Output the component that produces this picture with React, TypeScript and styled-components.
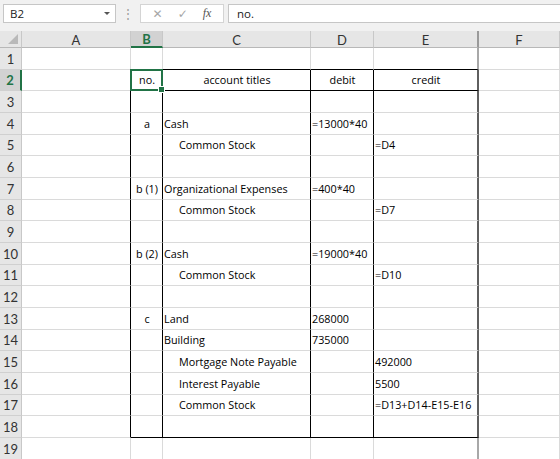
import styled, { createGlobalStyle } from "styled-components";

const GlobalStyle = createGlobalStyle`
  html, body {
    margin: 0;
    padding: 0;
    background: #ffffff;
  }
  body {
    font-family: "Open Sans", "Liberation Sans", sans-serif;
  }
`;

const GREEN = "#217346";
const GRID = "#dadada";
const INK = "#000000";

const Page = styled.div`
  width: 560px;
  height: 459px;
  overflow: hidden;
  background: #ffffff;
  display: flex;
  flex-direction: column;
`;

const FormulaBar = styled.div`
  height: 31px;
  flex: none;
  background: #f1f1f1;
  display: flex;
  align-items: flex-start;
  padding: 4px 0 0 3px;
  box-sizing: border-box;
`;

const NameBox = styled.div`
  width: 113px;
  height: 19px;
  box-sizing: border-box;
  background: #fff;
  border: 1px solid #c6c6c6;
  display: flex;
  align-items: center;
  justify-content: space-between;
  padding: 0 5px 0 6px;
  font-size: 11.5px;
  color: #222;
`;

const Caret = styled.span`
  width: 0;
  height: 0;
  border-left: 3px solid transparent;
  border-right: 3px solid transparent;
  border-top: 3px solid #555;
`;

const Dots = styled.div`
  width: 24px;
  height: 19px;
  display: flex;
  align-items: center;
  justify-content: center;
  color: #9a9a9a;
  font-size: 12px;
`;

const ButtonBox = styled.div`
  width: 84px;
  height: 19px;
  box-sizing: border-box;
  background: #fff;
  border: 1px solid #d4d4d4;
  display: flex;
  align-items: center;
  justify-content: space-around;
  padding: 0 4px;
  color: #a6a6a6;
`;

const Glyph = styled.span<{ $size: number }>`
  font-family: "DejaVu Sans", sans-serif;
  font-size: ${(p) => p.$size}px;
  line-height: 1;
`;

const Fx = styled.span`
  font-family: "Liberation Serif", serif;
  font-style: italic;
  font-size: 12px;
  color: #555;
`;

const FormulaInput = styled.div`
  flex: 1;
  height: 19px;
  margin-left: 4px;
  box-sizing: border-box;
  background: #fff;
  border: 1px solid #c6c6c6;
  border-right: none;
  display: flex;
  align-items: center;
  padding-left: 8px;
  font-size: 11.5px;
  color: #222;
`;

const Sheet = styled.div<{ $cols: string; $rows: string }>`
  display: grid;
  grid-template-columns: ${(p) => p.$cols};
  grid-template-rows: ${(p) => p.$rows};
  font-size: 10.8px;
  color: #000;
`;

const Corner = styled.div`
  background: #e6e6e6;
  border-right: 1px solid #c8c8c8;
  border-bottom: 1px solid #b8b8b8;
  position: relative;
  &::after {
    content: "";
    position: absolute;
    right: 3px;
    bottom: 3px;
    width: 0;
    height: 0;
    border-left: 10px solid transparent;
    border-bottom: 10px solid #b9b9b9;
  }
`;

const ColHead = styled.div<{ $active?: boolean; $edge?: boolean }>`
  background: ${(p) => (p.$active ? "#d2d2d2" : "#e6e6e6")};
  border-right: ${(p) => (p.$edge ? "2px solid #9a9a9a" : "1px solid #c8c8c8")};
  border-bottom: ${(p) => (p.$active ? `2px solid ${GREEN}` : "1px solid #b8b8b8")};
  color: ${(p) => (p.$active ? GREEN : "#333")};
  font-family: Lato, "Open Sans", sans-serif;
  font-weight: ${(p) => (p.$active ? 700 : 400)};
  display: flex;
  align-items: center;
  justify-content: center;
  font-size: 13px;
  padding-top: 1px;
`;

const RowHead = styled.div<{ $active?: boolean }>`
  background: ${(p) => (p.$active ? "#d2d2d2" : "#e6e6e6")};
  border-right: ${(p) => (p.$active ? `2px solid ${GREEN}` : "1px solid #c8c8c8")};
  border-bottom: 1px solid #d0d0d0;
  color: ${(p) => (p.$active ? GREEN : "#333")};
  font-family: Lato, "Open Sans", sans-serif;
  font-weight: ${(p) => (p.$active ? 700 : 400)};
  display: flex;
  align-items: flex-end;
  justify-content: center;
  padding-bottom: 2px;
  font-size: 13px;
`;

const Cell = styled.div<{
  $right?: string;
  $rightWidth?: number;
  $bottom?: string;
  $align?: "left" | "center";
  $indent?: boolean;
  $active?: boolean;
}>`
  position: relative;
  border-right: ${(p) => p.$rightWidth || 1}px solid ${(p) => p.$right || GRID};
  border-bottom: 1px solid ${(p) => p.$bottom || GRID};
  display: flex;
  align-items: flex-end;
  justify-content: ${(p) => (p.$align === "center" ? "center" : "flex-start")};
  padding: 0 0 3px ${(p) => (p.$indent ? "16px" : "1px")};
  white-space: nowrap;
  overflow: visible;
  min-width: 0;
  ${(p) =>
    p.$active &&
    `
    &::before {
      content: "";
      position: absolute;
      left: -1px;
      top: -1px;
      right: -1px;
      bottom: -1px;
      border: 2px solid ${GREEN};
      pointer-events: none;
      z-index: 2;
    }
    &::after {
      content: "";
      position: absolute;
      right: -3px;
      bottom: -3px;
      width: 5px;
      height: 5px;
      background: ${GREEN};
      border: 1px solid #fff;
      z-index: 3;
    }
  `}
`;

interface RowData {
  b?: string;
  c?: string;
  d?: string;
  e?: string;
  indent?: boolean;
  title?: boolean;
}

const rows: RowData[] = [
  {},
  { b: "no.", c: "account titles", d: "debit", e: "credit", title: true },
  {},
  { b: "a", c: "Cash", d: "=13000*40" },
  { c: "Common Stock", indent: true, e: "=D4" },
  {},
  { b: "b (1)", c: "Organizational Expenses", d: "=400*40" },
  { c: "Common Stock", indent: true, e: "=D7" },
  {},
  { b: "b (2)", c: "Cash", d: "=19000*40" },
  { c: "Common Stock", indent: true, e: "=D10" },
  {},
  { b: "c", c: "Land", d: "268000" },
  { c: "Building", d: "735000" },
  { c: "Mortgage Note Payable", indent: true, e: "492000" },
  { c: "Interest Payable", indent: true, e: "5500" },
  { c: "Common Stock", indent: true, e: "=D13+D14-E15-E16" },
  {},
  {},
];

const columns = ["A", "B", "C", "D", "E", "F"];
const colWidths = [22, 109, 32, 148, 63, 105, 81];

// rows in the shot are ~21.67px tall, so round each boundary
const rowHeights = rows.map((_, i) => {
  const top = Math.round(i * 21.667);
  const bottom = Math.round((i + 1) * 21.667);
  return bottom - top;
});

const FIRST = 2;
const LAST = 18;

function App() {
  const cols = colWidths.map((w) => `${w}px`).join(" ");
  const rowTemplate = ["17px", ...rowHeights.map((h) => `${h}px`)].join(" ");

  return (
    <Page>
      <GlobalStyle />
      <FormulaBar>
        <NameBox>
          <span>B2</span>
          <Caret />
        </NameBox>
        <Dots>⋮</Dots>
        <ButtonBox>
          <Glyph $size={12}>✕</Glyph>
          <Glyph $size={12}>✓</Glyph>
          <Fx>fx</Fx>
        </ButtonBox>
        <FormulaInput>no.</FormulaInput>
      </FormulaBar>

      <Sheet $cols={cols} $rows={rowTemplate}>
        <Corner />
        {columns.map((c) => (
          <ColHead key={c} $active={c === "B"} $edge={c === "E"}>
            {c}
          </ColHead>
        ))}

        {rows.map((r, i) => {
          const n = i + 1;
          const inTable = n >= FIRST && n <= LAST;
          const bottomLine = n === FIRST - 1 || n === FIRST || n === LAST;
          const tb = bottomLine ? INK : undefined;
          const tr = inTable ? INK : undefined;
          const center = r.title ? "center" : "left";
          return [
            <RowHead key={`h${n}`} $active={n === 2}>
              {n}
            </RowHead>,
            <Cell key={`a${n}`} $right={tr} />,
            <Cell key={`b${n}`} $right={tr} $bottom={tb} $align="center" $active={n === 2}>
              {r.b}
            </Cell>,
            <Cell key={`c${n}`} $right={tr} $bottom={tb} $align={center} $indent={r.indent}>
              {r.c}
            </Cell>,
            <Cell key={`d${n}`} $right={tr} $bottom={tb} $align={center}>
              {r.d}
            </Cell>,
            <Cell
              key={`e${n}`}
              $right={inTable ? "#5f5f5f" : "#a8a8a8"}
              $rightWidth={2}
              $bottom={tb}
              $align={center}
            >
              {r.e}
            </Cell>,
            <Cell key={`f${n}`} />,
          ];
        })}
      </Sheet>
    </Page>
  );
}

export default App;
